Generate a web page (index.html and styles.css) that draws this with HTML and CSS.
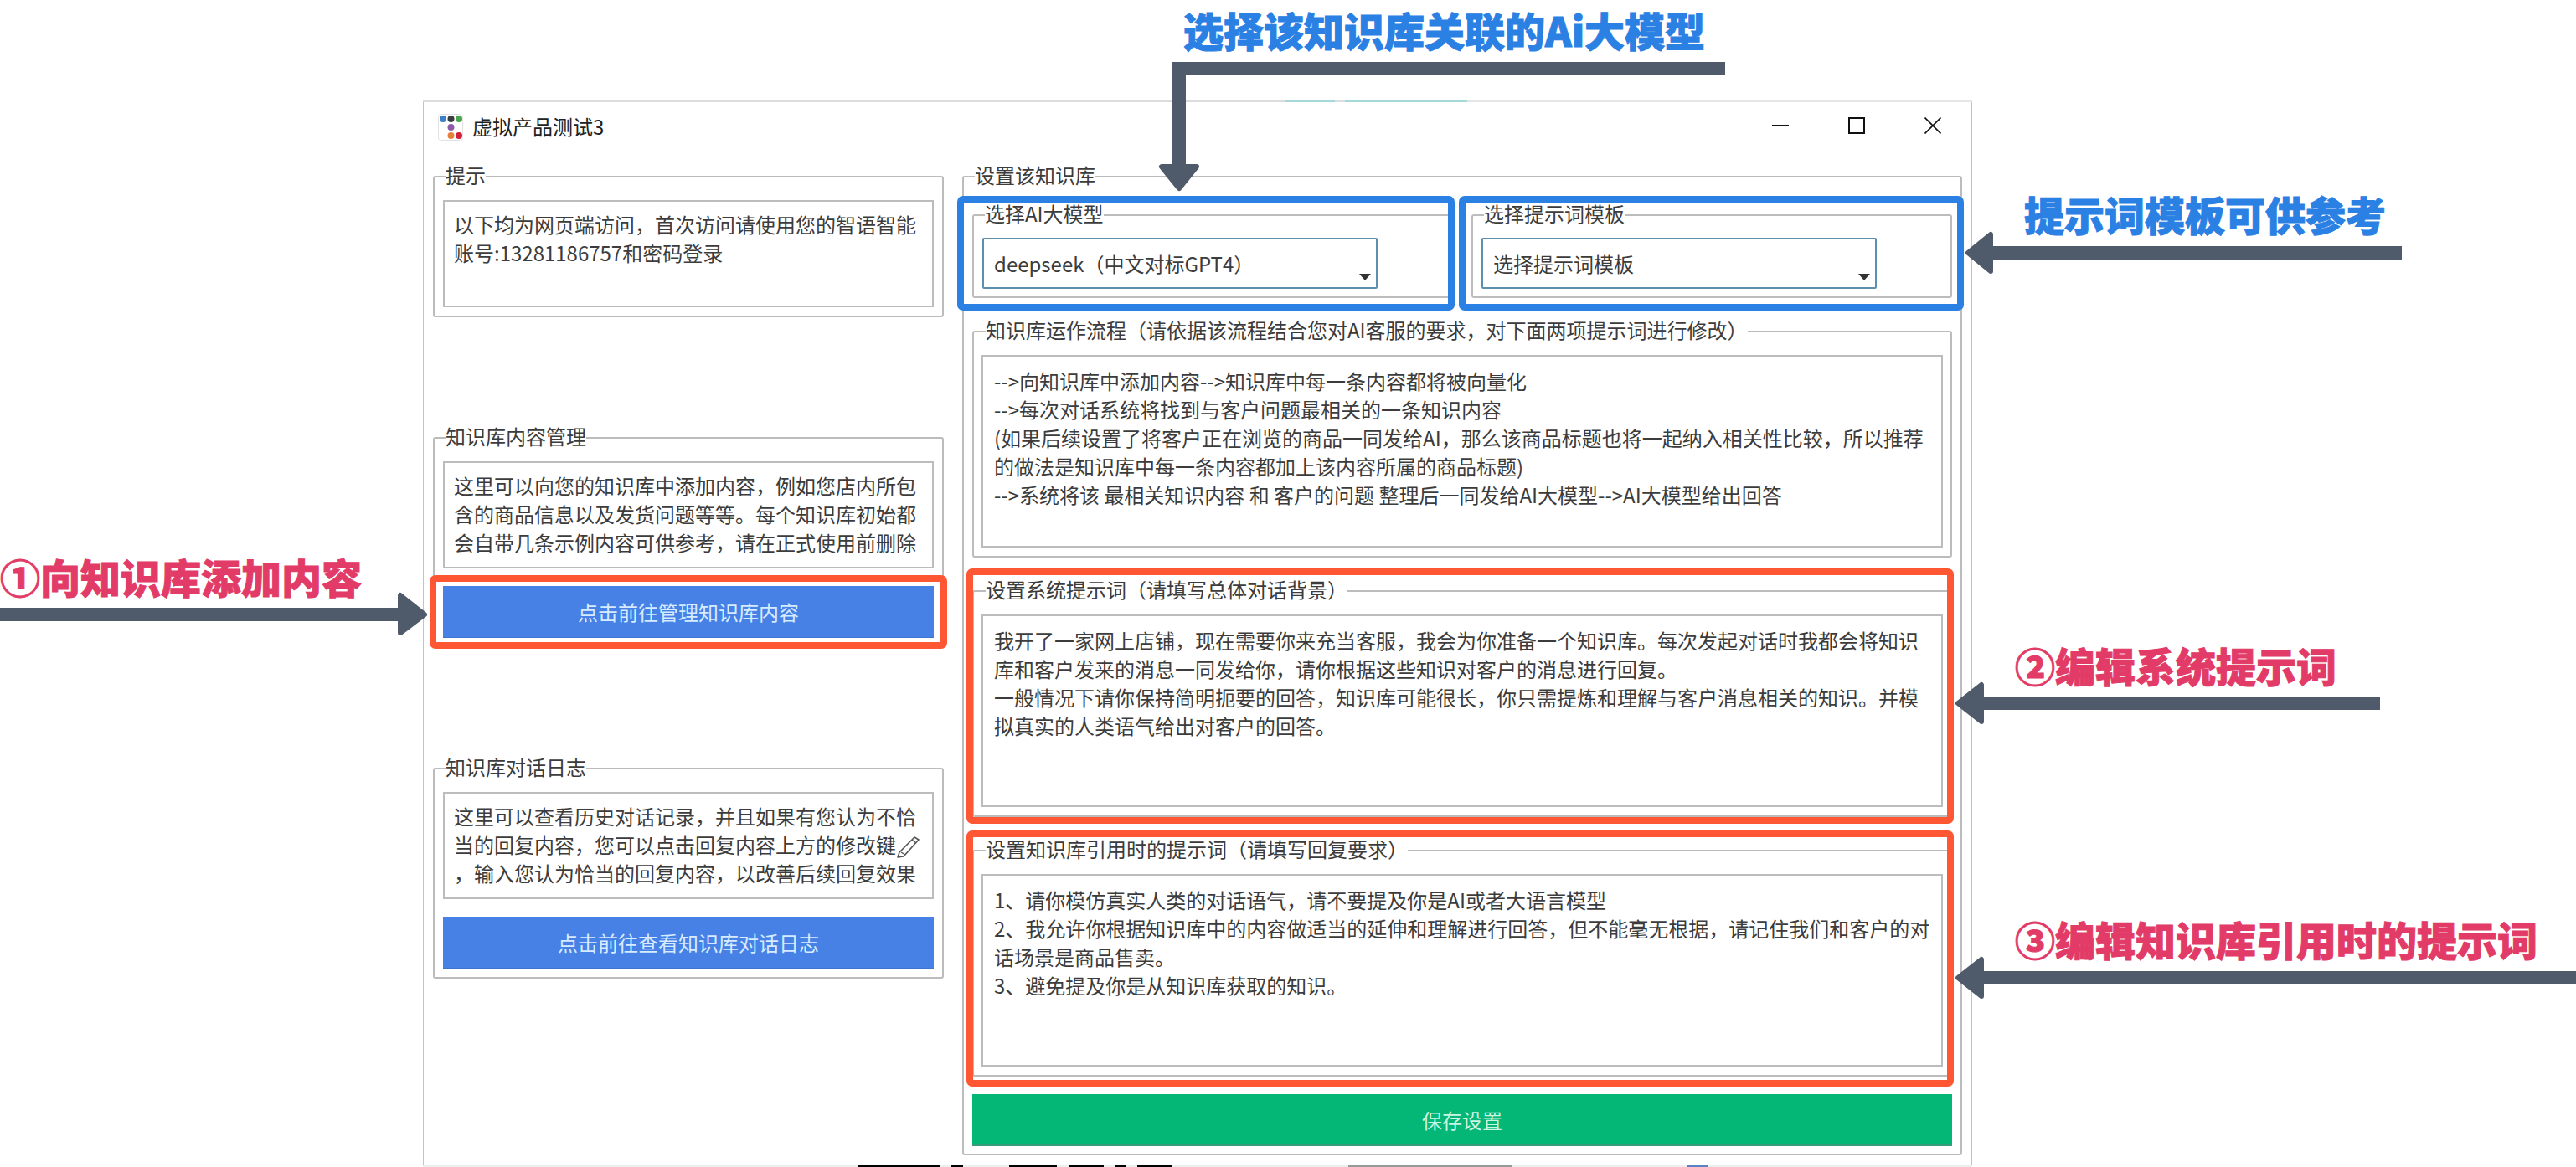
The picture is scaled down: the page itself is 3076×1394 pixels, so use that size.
FILE: index.html
```html
<!DOCTYPE html>
<html lang="zh-CN">
<head>
    <meta charset="UTF-8">
    <title>虚拟产品测试3</title>
    <link rel="stylesheet" href="styles.css">
</head>
<body>
    <div class="stage">
        <div class="scrap-top"></div>
        <div class="window">
            <div class="titlebar">
                <svg class="app-icon" width="30" height="32" viewBox="0 0 30 32">
                    <rect x="0.5" y="0.5" width="29" height="31" rx="3" fill="#fff" stroke="#e2e2e2"/>
                    <circle cx="6" cy="6" r="4" fill="#3f7fc8"/>
                    <circle cx="15.5" cy="6" r="4" fill="#3a3d3f"/>
                    <circle cx="25" cy="6" r="4" fill="#4ba64b"/>
                    <circle cx="15.5" cy="16" r="4" fill="#8d5aa8"/>
                    <circle cx="15.5" cy="26" r="4" fill="#e5803a"/>
                    <circle cx="25" cy="26" r="4" fill="#d21f3c"/>
                </svg>
                <span class="title">虚拟产品测试3</span>
                <div class="controls">
                    <svg width="20" height="20" viewBox="0 0 20 20"><path d="M0 10H20" stroke="#111" stroke-width="2"/></svg>
                    <svg width="20" height="20" viewBox="0 0 20 20"><rect x="1" y="1" width="18" height="18" fill="none" stroke="#111" stroke-width="2"/></svg>
                    <svg width="20" height="20" viewBox="0 0 20 20"><path d="M0.5 0.5L19.5 19.5M19.5 0.5L0.5 19.5" stroke="#111" stroke-width="1.6"/></svg>
                </div>
            </div>

            <div class="columns">
                <div class="left-col">
                    <fieldset class="group">
                        <legend>提示</legend>
                        <div class="note">以下均为网页端访问，首次访问请使用您的智语智能账号:13281186757和密码登录</div>
                    </fieldset>
                    <fieldset class="group">
                        <legend>知识库内容管理</legend>
                        <div class="note">这里可以向您的知识库中添加内容，例如您店内所包含的商品信息以及发货问题等等。每个知识库初始都会自带几条示例内容可供参考，请在正式使用前删除</div>
                        <button class="btn">点击前往管理知识库内容</button>
                    </fieldset>
                    <fieldset class="group">
                        <legend>知识库对话日志</legend>
                        <div class="note">这里可以查看历史对话记录，并且如果有您认为不恰当的回复内容，您可以点击回复内容上方的修改键<svg class="pencil" width="28" height="26" viewBox="0 0 28 26"><path d="M22 1L27 4L9 24L2 25L4 19Z" fill="#fff" stroke="#555" stroke-width="1.6" stroke-linejoin="round"/><path d="M19 4L24 8M6 19L11 22" stroke="#555" stroke-width="1.4"/></svg><br>，输入您认为恰当的回复内容，以改善后续回复效果</div>
                        <button class="btn">点击前往查看知识库对话日志</button>
                    </fieldset>
                </div>

                <fieldset class="group settings">
                    <legend>设置该知识库</legend>
                    <div class="select-row">
                        <fieldset class="group">
                            <legend>选择AI大模型</legend>
                            <div class="select"><span>deepseek（中文对标GPT4）</span><i class="caret"></i></div>
                        </fieldset>
                        <fieldset class="group">
                            <legend>选择提示词模板</legend>
                            <div class="select"><span>选择提示词模板</span><i class="caret"></i></div>
                        </fieldset>
                    </div>
                    <fieldset class="group section">
                        <legend>知识库运作流程（请依据该流程结合您对AI客服的要求，对下面两项提示词进行修改）</legend>
                        <div class="prompt">--&gt;向知识库中添加内容--&gt;知识库中每一条内容都将被向量化<br>--&gt;每次对话系统将找到与客户问题最相关的一条知识内容<br>(如果后续设置了将客户正在浏览的商品一同发给AI，那么该商品标题也将一起纳入相关性比较，所以推荐的做法是知识库中每一条内容都加上该内容所属的商品标题)<br>--&gt;系统将该 最相关知识内容 和 客户的问题 整理后一同发给AI大模型--&gt;AI大模型给出回答</div>
                    </fieldset>
                    <fieldset class="group section">
                        <legend>设置系统提示词（请填写总体对话背景）</legend>
                        <div class="prompt">我开了一家网上店铺，现在需要你来充当客服，我会为你准备一个知识库。每次发起对话时我都会将知识库和客户发来的消息一同发给你，请你根据这些知识对客户的消息进行回复。<br>一般情况下请你保持简明扼要的回答，知识库可能很长，你只需提炼和理解与客户消息相关的知识。并模拟真实的人类语气给出对客户的回答。</div>
                    </fieldset>
                    <fieldset class="group section">
                        <legend>设置知识库引用时的提示词（请填写回复要求）</legend>
                        <div class="prompt">1、请你模仿真实人类的对话语气，请不要提及你是AI或者大语言模型<br>2、我允许你根据知识库中的内容做适当的延伸和理解进行回答，但不能毫无根据，请记住我们和客户的对话场景是商品售卖。<br>3、避免提及你是从知识库获取的知识。</div>
                    </fieldset>
                    <button class="btn btn-save">保存设置</button>
                </fieldset>
            </div>
        </div>
        <div class="scrap-bottom"></div>

        <!-- annotations drawn over the screenshot -->
        <svg class="marks" width="3076" height="1394" viewBox="0 0 3076 1394">
            <g class="frame-blue">
                <rect x="1147" y="238" width="586" height="129" rx="3"/>
                <rect x="1746" y="238" width="595" height="129" rx="3"/>
            </g>
            <g class="frame-red">
                <rect x="517" y="691" width="610" height="80" rx="3"/>
                <rect x="1158" y="683" width="1171" height="297" rx="3"/>
                <rect x="1158" y="996" width="1171" height="298" rx="3"/>
            </g>
            <g class="arrow">
                <path d="M2060 82H1408V200"/>
                <polygon points="1387,199 1429,199 1408,225"/>
                <path d="M0 734H480"/>
                <polygon points="478,711 478,756 507,734"/>
                <path d="M2868 302H2375"/>
                <polygon points="2377,280 2377,324 2350,302"/>
                <path d="M2842 840H2364"/>
                <polygon points="2366,818 2366,862 2338,840"/>
                <path d="M3076 1168H2364"/>
                <polygon points="2366,1146 2366,1190 2338,1168"/>
            </g>
        </svg>
        <div class="tag tag-blue tag-model">选择该知识库关联的Ai大模型</div>
        <div class="tag tag-blue tag-template">提示词模板可供参考</div>
        <div class="tag tag-pink tag-add">①向知识库添加内容</div>
        <div class="tag tag-pink tag-system">②编辑系统提示词</div>
        <div class="tag tag-pink tag-quote">③编辑知识库引用时的提示词</div>
    </div>
</body>
</html>
```

FILE: styles.css
```css
* {
    box-sizing: border-box;
}
body {
    margin: 0;
    background: #fff;
    font-family: "Noto Sans CJK SC", "Liberation Sans", sans-serif;
    font-size: 24px;
    color: #3c3c3c;
}
.stage {
    position: relative;
    width: 3076px;
    height: 1394px;
    padding: 120px 721px 0 505px;
    overflow: hidden;
}

/* leftovers of the page behind the window */
.scrap-top {
    height: 2px;
    background: linear-gradient(to right,
        #dcdcdc 0, #dcdcdc 1030px,
        #a5d8d8 1030px, #a5d8d8 1089px,
        #dcdcdc 1089px, #dcdcdc 1101px,
        #a5d8d8 1101px, #a5d8d8 1247px,
        #e6e6e6 1247px);
}
.scrap-bottom {
    height: 2px;
    background: linear-gradient(to right,
        #eee 0, #eee 519px,
        #000 519px, #000 617px,
        #eee 617px, #eee 631px,
        #000 631px, #000 645px,
        #eee 645px, #eee 700px,
        #000 700px, #000 757px,
        #eee 757px, #eee 771px,
        #000 771px, #000 813px,
        #eee 813px, #eee 827px,
        #000 827px, #000 839px,
        #eee 839px, #eee 853px,
        #000 853px, #000 895px,
        #eee 895px, #eee 1105px,
        #999 1105px, #999 1300px,
        #eee 1300px, #eee 1510px,
        #5b82c4 1510px, #5b82c4 1535px,
        #eee 1535px);
}

.window {
    height: 1270px;
    background: #fff;
    border-left: 1px solid #c4c4c4;
    border-right: 1px solid #b9c6cc;
}
.titlebar {
    display: flex;
    align-items: center;
    height: 60px;
    padding: 0 36px 0 17px;
    margin-bottom: 15px;
    color: #222;
}
.app-icon {
    margin-right: 11px;
}
.title {
    margin-bottom: 3px;
}
.controls {
    display: flex;
    gap: 71px;
    margin-left: auto;
    margin-bottom: 4px;
}
.controls svg {
    display: block;
}

.columns {
    display: flex;
    gap: 22px;
    padding-left: 11px;
}
.left-col {
    display: flex;
    flex-direction: column;
    gap: 130px;
    width: 610px;
}

.group {
    min-width: 0;
    margin: 0;
    padding: 0 10px 10px;
    border: 2px solid #bcbcbc;
    border-radius: 3px;
}
legend {
    margin-left: 3px;
    padding: 0 0 4px;
    line-height: 24px;
    white-space: nowrap;
}
.note {
    height: 128px;
    margin-top: 14px;
    padding: 10px 11px 0;
    border: 2px solid #bcbcbc;
    line-height: 34px;
}
.pencil {
    vertical-align: -6px;
}
.btn {
    display: block;
    width: 100%;
    height: 62px;
    margin-top: 21px;
    border: 0;
    border-bottom: 1px solid #3f74cf;
    background: #4781e6;
    color: #d6ebff;
    font: inherit;
}

.settings {
    width: 1194px;
    padding-bottom: 9px;
}
.select-row {
    display: flex;
    gap: 24px;
    margin-top: 18px;
}
.select-row .group:first-child {
    width: 572px;
}
.select-row .group:last-child {
    width: 574px;
}
.select-row .group {
    padding-bottom: 9px;
}
.select {
    display: flex;
    justify-content: space-between;
    width: 472px;
    height: 61px;
    margin-top: 13px;
    padding: 13px 6px 0 12px;
    border: 2px solid #5f8fae;
    border-radius: 2px;
    line-height: 32px;
}
.caret {
    align-self: flex-end;
    margin-bottom: 8px;
    border-left: 7px solid transparent;
    border-right: 7px solid transparent;
    border-top: 8px solid #333;
}
.section {
    margin-top: 26px;
}
.prompt {
    height: 230px;
    margin-top: 14px;
    padding: 12px 9px 0 13px;
    border: 2px solid #bcbcbc;
    line-height: 34px;
}
.section legend {
    margin-left: 4px;
}
.section .prompt {
    margin-left: -1px;
    margin-right: -1px;
}
.btn-save {
    margin-top: 21px;
    border-bottom: 2px solid #3a9d7a;
    background: #04b776;
    color: #c9f5e2;
}

.marks {
    position: absolute;
    top: 0;
    left: 0;
}
.marks rect {
    fill: none;
    stroke-width: 8;
}
.frame-blue rect {
    stroke: #2b80e3;
}
.frame-red rect {
    stroke: #ff5733;
}
.arrow path {
    fill: none;
    stroke: #4f5b6b;
    stroke-width: 16;
}
.arrow polygon {
    fill: #4f5b6b;
    stroke: #4f5b6b;
    stroke-width: 6;
    stroke-linejoin: round;
}

.tag {
    position: absolute;
    font-size: 48px;
    font-weight: 900;
    line-height: 48px;
    white-space: nowrap;
    -webkit-text-stroke: 1px currentColor;
}
.tag-blue {
    color: #2b80e3;
}
.tag-pink {
    color: #e23b68;
}
.tag-model {
    left: 1413px;
    top: 11px;
}
.tag-template {
    left: 2417px;
    top: 231px;
}
.tag-add {
    left: 0;
    top: 664px;
}
.tag-system {
    left: 2406px;
    top: 770px;
}
.tag-quote {
    left: 2406px;
    top: 1097px;
}
```
